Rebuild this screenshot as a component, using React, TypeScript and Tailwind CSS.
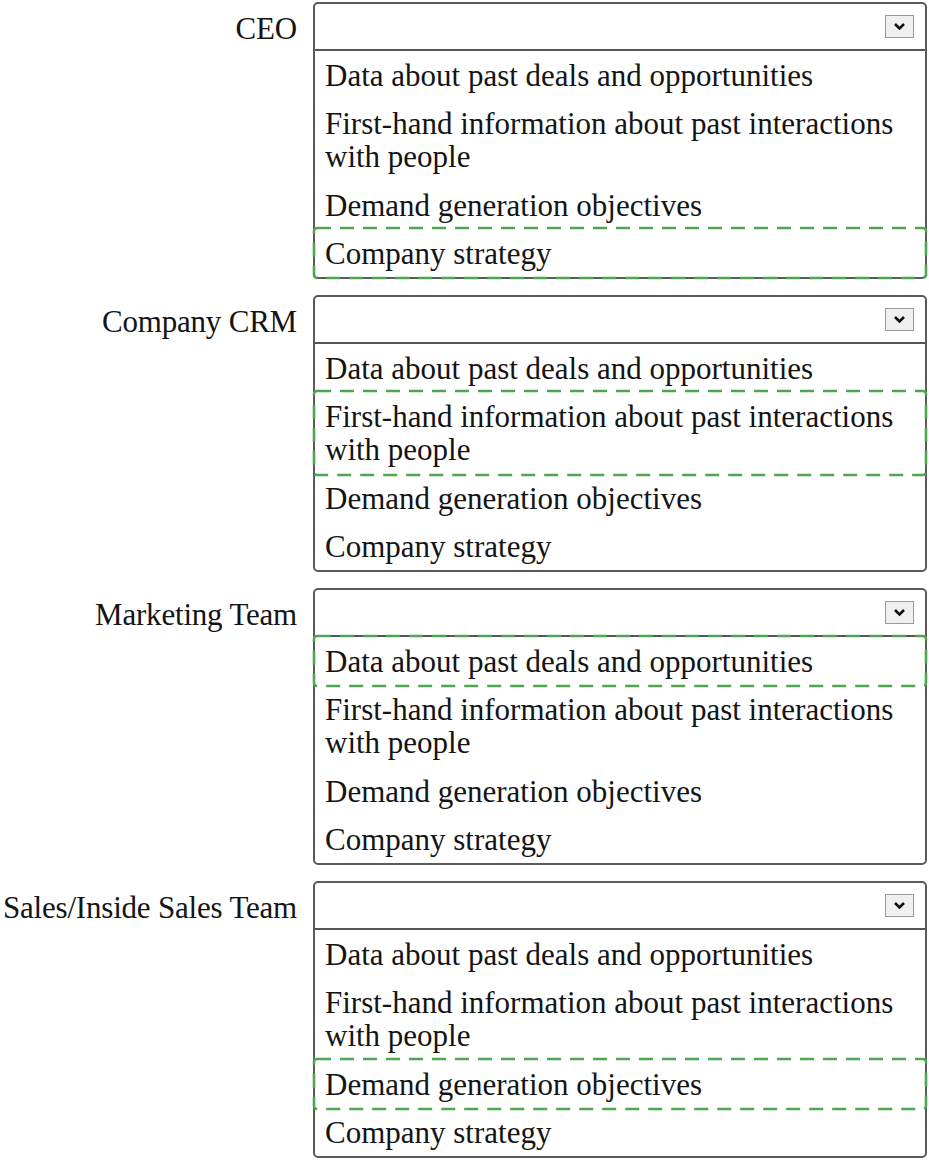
import React from "react";

const OPTIONS = [
  { key: "data", lines: ["Data about past deals and opportunities"], h: "h-[48px]" },
  {
    key: "first",
    lines: ["First-hand information about past interactions", "with people"],
    h: "h-[82px]",
  },
  { key: "demand", lines: ["Demand generation objectives"], h: "h-[48px]" },
  { key: "company", lines: ["Company strategy"], h: "h-[48px]" },
];

const BLOCKS = [
  { label: "CEO", selected: "company" },
  { label: "Company CRM", selected: "first" },
  { label: "Marketing Team", selected: "data" },
  { label: "Sales/Inside Sales Team", selected: "demand" },
];

function DashedHighlight() {
  return (
    <svg
      className="absolute -top-[1px] -left-[1px] w-[calc(100%+2px)] h-[calc(100%+2px)] overflow-visible pointer-events-none"
      preserveAspectRatio="none"
    >
      <rect
        x="0"
        y="0"
        width="100%"
        height="100%"
        rx="3"
        fill="none"
        stroke="#4fa64f"
        strokeWidth="2.6"
        strokeDasharray="14 9"
      />
    </svg>
  );
}

function Chevron() {
  return (
    <svg width="13" height="9" viewBox="0 0 13 9">
      <polyline points="2,2 6.5,6.5 11,2" fill="none" stroke="#111" strokeWidth="2.6" />
    </svg>
  );
}

function Block({ label, selected }: { label: string; selected: string }) {
  return (
    <div className="flex items-start">
      <div className="w-[297px] flex justify-end pt-[10px] leading-[33px] whitespace-nowrap tracking-[-0.2px]">
        {label}
      </div>
      <div className="ml-[16px] w-[614px] border-2 border-[#5a5a5a] rounded-[5px] bg-white">
        <div className="h-[47px] border-b-2 border-[#555] flex items-center justify-end pr-[11px]">
          <div className="w-[29px] h-[23px] bg-[#f0f0f0] border border-[#9a9a9a] flex items-center justify-center">
            <Chevron />
          </div>
        </div>
        {OPTIONS.map((o) => (
          <div key={o.key} className={`relative ${o.h} flex items-center px-[10px]`}>
            <div className="leading-[33px]">
              {o.lines.map((l, i) => (
                <div key={i}>{l}</div>
              ))}
            </div>
            {o.key === selected && <DashedHighlight />}
          </div>
        ))}
      </div>
    </div>
  );
}

export default function App() {
  return (
    <div className="w-[929px] h-[1161px] bg-white pt-[2px] flex flex-col gap-[16px] font-['Liberation_Serif',serif] text-[31px] text-[#141414] overflow-hidden">
      {BLOCKS.map((b) => (
        <Block key={b.label} label={b.label} selected={b.selected} />
      ))}
    </div>
  );
}
